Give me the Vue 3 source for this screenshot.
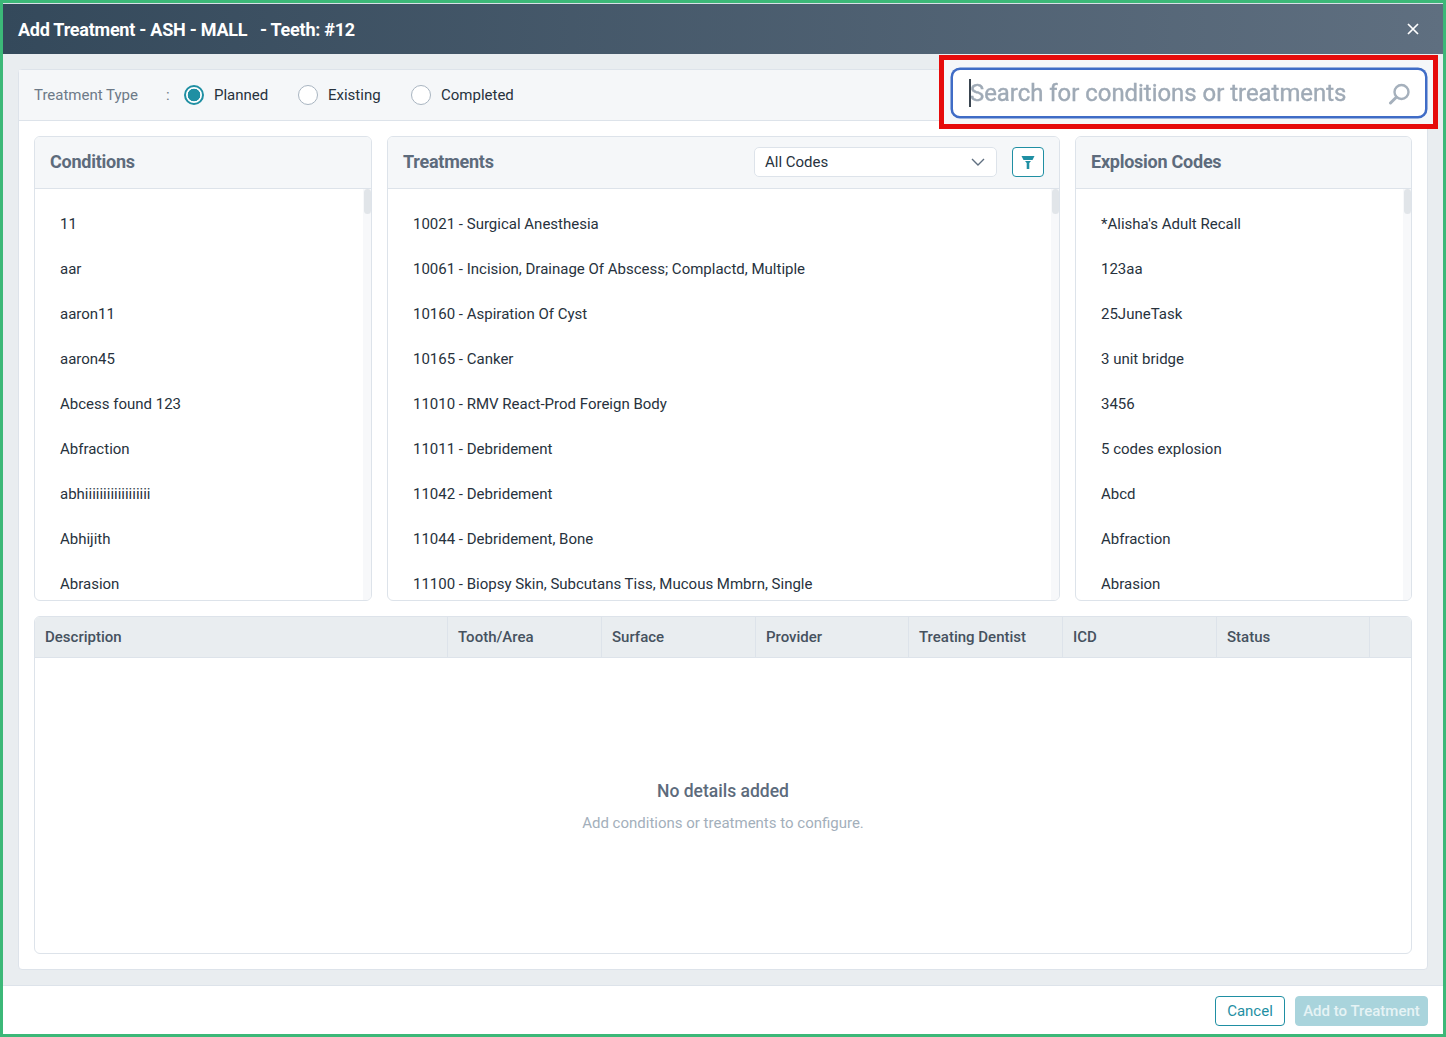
<template>
  <div class="modal">
    <header class="modal-head">
      <h1>{{ title }}</h1>
      <svg class="close" width="12" height="12" viewBox="0 0 12 12" aria-label="Close">
        <path d="M1 1l10 10M11 1L1 11" stroke="#fff" stroke-width="1.7" fill="none" />
      </svg>
    </header>

    <main class="modal-body">
      <section class="sheet">
        <div class="type-bar">
          <span class="type-label">Treatment Type</span>
          <span class="type-colon">:</span>
          <label v-for="t in types" :key="t.name" class="radio" :style="{ width: t.width + 'px' }">
            <span class="dot" :class="{ on: t.on }"></span>
            {{ t.name }}
          </label>
        </div>

        <div class="panels">
          <div v-for="p in panels" :key="p.title" class="panel" :class="p.cls">
            <div class="panel-head">
              <h2>{{ p.title }}</h2>
              <template v-if="p.cls === 'treatments'">
                <div class="code-select">
                  <span>All Codes</span>
                  <svg width="14" height="8" viewBox="0 0 14 8">
                    <path d="M1 1l6 6 6-6" stroke="#5f6f80" stroke-width="1.4" fill="none" />
                  </svg>
                </div>
                <button class="filter-btn" type="button" aria-label="Filter">
                  <svg width="14" height="14" viewBox="0 0 14 14">
                    <path d="M0.5 1h13L11.5 5h-9z" fill="#1f8fa3" />
                    <path d="M4 6h6L8.3 8v6H5.7V8z" fill="#1f8fa3" />
                  </svg>
                </button>
              </template>
            </div>
            <div class="panel-main">
              <ul>
                <li v-for="item in p.items" :key="item">{{ item }}</li>
              </ul>
              <div class="track"><div class="thumb"></div></div>
            </div>
          </div>
        </div>

        <div class="table">
          <div class="table-head">
            <div v-for="c in columns" :key="c" class="col">{{ c }}</div>
            <div class="col last"></div>
          </div>
          <div class="empty">
            <strong>No details added</strong>
            <p>Add conditions or treatments to configure.</p>
          </div>
        </div>
      </section>
    </main>

    <footer class="modal-foot">
      <button class="btn cancel" type="button">Cancel</button>
      <button class="btn add" type="button">Add to Treatment</button>
    </footer>

    <!-- red marker drawn over the screenshot -->
    <div class="marker">
      <div class="search">
        <i class="caret"></i>
        <input type="text" placeholder="Search for conditions or treatments" />
        <svg width="24" height="24" viewBox="0 0 24 24">
          <circle cx="14.5" cy="11" r="7" stroke="#a5b0bc" stroke-width="2.4" fill="none" />
          <path d="M9.3 16.2L3.5 22" stroke="#a5b0bc" stroke-width="3" stroke-linecap="round" />
        </svg>
      </div>
    </div>
  </div>
</template>

<script setup>
const title = 'Add Treatment - ASH - MALL \u00a0 - Teeth: #12'

const types = [
  { name: 'Planned', on: true, width: 114 },
  { name: 'Existing', on: false, width: 113 },
  { name: 'Completed', on: false, width: 120 }
]

const panels = [
  {
    title: 'Conditions',
    cls: 'conditions',
    items: ['11', 'aar', 'aaron11', 'aaron45', 'Abcess found 123', 'Abfraction', 'abhiiiiiiiiiiiiiiiiii', 'Abhijith', 'Abrasion']
  },
  {
    title: 'Treatments',
    cls: 'treatments',
    items: [
      '10021 - Surgical Anesthesia',
      '10061 - Incision, Drainage Of Abscess; Complactd, Multiple',
      '10160 - Aspiration Of Cyst',
      '10165 - Canker',
      '11010 - RMV React-Prod Foreign Body',
      '11011 - Debridement',
      '11042 - Debridement',
      '11044 - Debridement, Bone',
      '11100 - Biopsy Skin, Subcutans Tiss, Mucous Mmbrn, Single'
    ]
  },
  {
    title: 'Explosion Codes',
    cls: 'explosion',
    items: ["*Alisha's Adult Recall", '123aa', '25JuneTask', '3 unit bridge', '3456', '5 codes explosion', 'Abcd', 'Abfraction', 'Abrasion']
  }
]

const columns = ['Description', 'Tooth/Area', 'Surface', 'Provider', 'Treating Dentist', 'ICD', 'Status']
</script>

<style>
html, body { margin: 0; background: #fff; }
</style>

<style scoped>
* { box-sizing: border-box; }

.modal {
  position: relative;
  width: 1446px;
  height: 1037px;
  display: flex;
  flex-direction: column;
  border: 3px solid #3cb878;
  font-family: Roboto, "Liberation Sans", sans-serif;
  color: #27323d;
  overflow: hidden;
}

.modal-head {
  height: 51px;
  flex: none;
  display: flex;
  align-items: center;
  justify-content: space-between;
  padding: 0 24px 0 15px;
  background: linear-gradient(90deg, #34495b 0%, #5f6f80 100%);
  border-top: 1px solid #d8e0e6;
}
.modal-head h1 {
  margin: 0;
  font-size: 18px;
  font-weight: 700;
  letter-spacing: -0.25px;
  color: #fff;
  white-space: pre;
}

.modal-body {
  flex: 1;
  min-height: 0;
  padding: 15px;
  background: #e9edf0;
  display: flex;
}

.sheet {
  flex: 1;
  min-width: 0;
  background: #fff;
  border: 1px solid #dde3ea;
  border-radius: 4px;
  display: flex;
  flex-direction: column;
}

.type-bar {
  height: 51px;
  flex: none;
  display: flex;
  align-items: center;
  padding-left: 15px;
  background: #f5f7f9;
  border-bottom: 1px solid #dde3ea;
  font-size: 15px;
}
.type-label { width: 132px; color: #6d7a88; }
.type-colon { width: 18px; color: #6d7a88; }
.radio { display: flex; align-items: center; gap: 10px; color: #27323d; }
.dot {
  width: 20px;
  height: 20px;
  border-radius: 50%;
  border: 1px solid #a9b5c1;
  background: #fff;
}
.dot.on {
  border: 2px solid #1f8fa3;
  background: radial-gradient(circle, #1f8fa3 0 6px, #fff 6.6px);
}

.panels {
  display: flex;
  gap: 15px;
  padding: 15px 15px 0;
  height: 480px;
  flex: none;
}
.panel {
  display: flex;
  flex-direction: column;
  border: 1px solid #dde3ea;
  border-radius: 6px;
  overflow: hidden;
  min-width: 0;
}
.conditions { width: 338px; }
.treatments { width: 673px; }
.explosion { width: 337px; }

.panel-head {
  height: 52px;
  flex: none;
  display: flex;
  align-items: center;
  padding: 0 15px 1px;
  background: #f5f7f9;
  border-bottom: 1px solid #dde3ea;
}
.panel-head h2 {
  margin: 0 0 2px;
  flex: 1;
  font-size: 18px;
  font-weight: 700;
  letter-spacing: -0.25px;
  color: #5d6b7c;
}

.code-select {
  width: 243px;
  height: 30px;
  display: flex;
  align-items: center;
  justify-content: space-between;
  padding: 0 11px 0 10px;
  background: #fff;
  border: 1px solid #dde3ea;
  border-radius: 5px;
  font-size: 15px;
}
.filter-btn {
  width: 32px;
  height: 30px;
  margin-left: 15px;
  padding: 0;
  display: flex;
  align-items: center;
  justify-content: center;
  background: #fff;
  border: 1px solid #1f8fa3;
  border-radius: 4px;
}

.panel-main {
  flex: 1;
  min-height: 0;
  display: flex;
  overflow: hidden;
}
.panel-main ul {
  flex: 1;
  margin: 0;
  padding: 13px 25px 0;
  list-style: none;
  font-size: 15px;
  overflow: hidden;
}
.panel-main li {
  height: 45px;
  line-height: 45px;
  white-space: nowrap;
}
.track { width: 8px; flex: none; background: #f7f8fa; }
.thumb { width: 7px; height: 25px; margin-left: auto; border-radius: 4px; background: #e1e5e9; }

.table {
  flex: 1;
  min-height: 0;
  margin: 15px;
  border: 1px solid #dde3ea;
  border-radius: 6px;
  overflow: hidden;
  display: flex;
  flex-direction: column;
}
.table-head {
  height: 41px;
  flex: none;
  display: grid;
  grid-template-columns: 413px 154px 154px 153px 154px 154px 153px 1fr;
  background: #e9edf0;
  border-bottom: 1px solid #dde3ea;
}
.col {
  padding-left: 10px;
  line-height: 40px;
  font-size: 15px;
  font-weight: 500;
  color: #46525f;
  border-right: 1px solid #dde3ea;
}
.col.last { border-right: 0; }

.empty {
  flex: 1;
  display: flex;
  flex-direction: column;
  align-items: center;
  justify-content: center;
}
.empty strong { font-size: 17.5px; font-weight: 500; color: #5d6b7c; line-height: 24px; }
.empty p { margin: 10px 0 0; font-size: 15px; line-height: 20px; color: #a3afbb; }

.modal-foot {
  height: 49px;
  flex: none;
  display: flex;
  justify-content: flex-end;
  align-items: flex-start;
  gap: 10px;
  padding: 10px 15px 0 0;
  background: #fff;
  border-top: 1px solid #dde3ea;
}
.btn {
  height: 30px;
  padding: 0;
  font: 400 15px Roboto, "Liberation Sans", sans-serif;
  border-radius: 4px;
}
.cancel { width: 70px; background: #fff; color: #1f8fa3; border: 1px solid #1f8fa3; }
.add { width: 133px; background: #a9d4dc; color: #e6f3f5; border: 1px solid #a9d4dc; font-weight: 500; }

.marker {
  position: absolute;
  left: 936px;
  top: 52px;
  width: 499px;
  height: 74px;
  border: 5px solid #e60b0b;
  background: #f5f7f9;
  padding: 8px 6px 0 7px;
}
.search {
  position: relative;
  height: 50px;
  display: flex;
  align-items: center;
  padding: 0 14px 0 17px;
  background: #fff;
  border: 2.5px solid #3f6cc6;
  border-radius: 9px;
  box-shadow: 0 0 0 0.5px #3f6cc6;
  filter: blur(0.6px);
}
.search input {
  flex: 1;
  min-width: 0;
  border: 0;
  outline: 0;
  padding: 0;
  background: transparent;
  font: 400 23.9px Roboto, "Liberation Sans", sans-serif;
}
.search input::placeholder {
  color: #9faab6;
  opacity: 1;
  -webkit-text-stroke: 0.4px #9faab6;
}
.caret {
  position: absolute;
  left: 16px;
  top: 9px;
  width: 2px;
  height: 28px;
  background: #3a4550;
}
</style>
